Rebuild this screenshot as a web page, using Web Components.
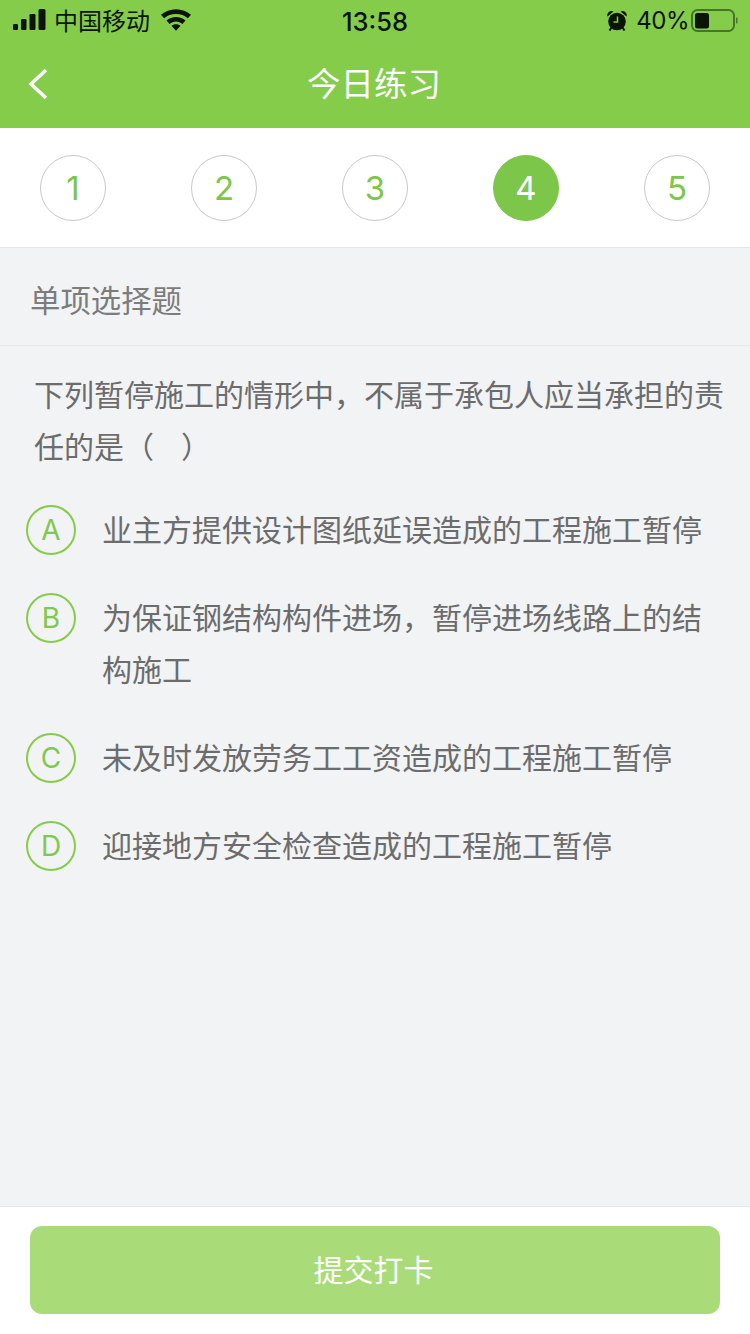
<!DOCTYPE html>
<html lang="zh">
<head>
<meta charset="utf-8">
<title>今日练习</title>
<style>
  html, body { margin: 0; padding: 0; }
  body {
    width: 750px;
    height: 1334px;
    display: flex;
    flex-direction: column;
    background: #f2f3f5;
    font-family: "Noto Sans CJK SC", "Noto Sans", sans-serif;
    overflow: hidden;
  }
  question-list { flex: 1; }
</style>
</head>
<body>
<app-header title="今日练习"></app-header>
<step-bar>
  <step-dot>1</step-dot>
  <step-dot>2</step-dot>
  <step-dot>3</step-dot>
  <step-dot active>4</step-dot>
  <step-dot>5</step-dot>
</step-bar>
<question-list heading="单项选择题">
  <span slot="question">下列暂停施工的情形中，不属于承包人应当承担的责任的是（&nbsp;&nbsp;&nbsp;&nbsp;）</span>
  <option-row letter="A">业主方提供设计图纸延误造成的工程施工暂停</option-row>
  <option-row letter="B">为保证钢结构构件进场，暂停进场线路上的结构施工</option-row>
  <option-row letter="C">未及时发放劳务工工资造成的工程施工暂停</option-row>
  <option-row letter="D">迎接地方安全检查造成的工程施工暂停</option-row>
</question-list>
<submit-bar>提交打卡</submit-bar>

<script>
const headerTemplate = document.createElement('template');
headerTemplate.innerHTML = `
<style>
  :host { display: block; height: 128px; background: #86cc4b; }
  .status {
    height: 40px;
    display: grid;
    grid-template-columns: 1fr auto 1fr;
    align-items: center;
    padding: 0 12px 0 13px;
    color: #0c1408;
    font-size: 24px;
    font-family: "Noto Sans CJK SC", sans-serif;
  }
  .left, .right { display: flex; align-items: center; }
  .left span { margin: -2px 0 0 8px; }
  .left svg:last-child { margin-left: 11px; }
  .right { justify-content: flex-end; }
  .time { font: 500 25.500px Inter, "Liberation Sans", sans-serif; padding: 2px 1px 0 0; }
  .pct { font: 400 24px Inter, "Liberation Sans", sans-serif; margin: 0 2px 0 9px; letter-spacing: -0.5px; }
  .nav {
    height: 88px;
    display: flex;
    align-items: center;
    justify-content: center;
    position: relative;
  }
  .back { position: absolute; left: 28px; top: 28px; }
  h1 { margin: 0 2px 6px 0; font-size: 33.500px; font-weight: 400; color: #fff; }
</style>
<div class="status">
  <div class="left">
    <svg width="33" height="22" viewBox="0 0 33 22" fill="#0c1408">
      <rect x="0" y="15" width="5" height="6" rx="1.2"/>
      <rect x="8" y="10" width="5.5" height="11" rx="1.2"/>
      <rect x="16.500" y="5" width="6" height="16" rx="1.2"/>
      <rect x="25.500" y="0" width="7" height="21" rx="1.5"/>
    </svg>
    <span>中国移动</span>
    <svg width="30" height="22" viewBox="0 0 29 21" fill="#0c1408">
      <path d="M14.500 0C9 0 4 2 0 5.500l3 3.400C6 6.200 10 4.700 14.500 4.700s8.500 1.500 11.500 4.200l3-3.400C25 2 20 0 14.500 0z"/>
      <path d="M14.500 7.500c-3.600 0-6.800 1.300-9.200 3.500l3 3.300c1.700-1.400 3.800-2.300 6.200-2.300s4.500.9 6.200 2.300l3-3.300c-2.400-2.200-5.600-3.500-9.200-3.500z"/>
      <path d="M14.500 14.500c-1.800 0-3.300.6-4.400 1.600l4.400 4.900 4.400-4.900c-1.100-1-2.600-1.600-4.400-1.600z"/>
    </svg>
  </div>
  <div class="time">13:58</div>
  <div class="right">
    <svg width="20" height="21" viewBox="0 0 20 21" fill="#0c1408">
      <circle cx="10" cy="11.500" r="8.800"/>
      <path d="M.5 6.500a4.200 4.200 0 0 1 6-5zM19.500 6.500a4.200 4.200 0 0 0-6-5z"/>
      <path d="M4.500 17.500l-2 3M15.500 17.500l2 3" stroke="#0c1408" stroke-width="2"/>
      <path d="M10.500 6.500v5.500H6.500" fill="none" stroke="#86cc4b" stroke-width="1.500"/>
    </svg>
    <span class="pct">40%</span>
    <svg width="47" height="23" viewBox="0 0 47 23">
      <rect x="1" y="1" width="42" height="21" rx="5.500" fill="none" stroke="#47742a" stroke-width="2"/>
      <rect x="4" y="4" width="14" height="15.500" rx="2.500" fill="#0c1408"/>
      <rect x="45" y="8.500" width="1.500" height="6" rx="0.700" fill="#47742a"/>
    </svg>
  </div>
</div>
<div class="nav">
  <svg class="back" width="20" height="32" viewBox="0 0 20 32" fill="none" stroke="#fff" stroke-width="3.500">
    <path d="M18 2L3 16l15 14"/>
  </svg>
  <h1></h1>
</div>
`;

class AppHeader extends HTMLElement {
  constructor() {
    super();
    this.attachShadow({ mode: 'open' });
    this.shadowRoot.appendChild(headerTemplate.content.cloneNode(true));
    this.shadowRoot.querySelector('h1').textContent = this.getAttribute('title');
  }
}

const stepBarTemplate = document.createElement('template');
stepBarTemplate.innerHTML = `
<style>
  :host {
    display: flex;
    justify-content: space-between;
    align-items: center;
    height: 119px;
    padding: 0 40px 0 40px;
    background: #fff;
    border-bottom: 1px solid #e6e6e6;
  }
</style>
<slot></slot>
`;

class StepBar extends HTMLElement {
  constructor() {
    super();
    this.attachShadow({ mode: 'open' });
    this.shadowRoot.appendChild(stepBarTemplate.content.cloneNode(true));
  }
}

const stepDotTemplate = document.createElement('template');
stepDotTemplate.innerHTML = `
<style>
  :host {
    box-sizing: border-box;
    display: flex;
    align-items: center;
    justify-content: center;
    width: 66px;
    height: 66px;
    border: 1px solid #c9c9c9;
    border-radius: 50%;
    color: #7cc64a;
    font: 400 33px Inter, "Liberation Sans", sans-serif;
  }
  :host([active]) {
    background: #7cc64a;
    border-color: #7cc64a;
    color: #fff;
  }
</style>
<slot></slot>
`;

class StepDot extends HTMLElement {
  constructor() {
    super();
    this.attachShadow({ mode: 'open' });
    this.shadowRoot.appendChild(stepDotTemplate.content.cloneNode(true));
  }
}

const questionTemplate = document.createElement('template');
questionTemplate.innerHTML = `
<style>
  :host { display: block; color: #6c6c6c; }
  .heading {
    height: 98px;
    box-sizing: border-box;
    padding: 5px 0 0 30px;
    display: flex;
    align-items: center;
    border-bottom: 1px solid #e6e7e9;
    font-size: 30.400px;
    color: #7c7c7c;
  }
  .question {
    padding: 21px 26px 0 34px;
    font-size: 30px;
    line-height: 52px;
  }
  .options {
    display: flex;
    flex-direction: column;
    gap: 36px;
    margin-top: 33px;
  }
</style>
<div class="heading"></div>
<div class="question"><slot name="question"></slot></div>
<div class="options"><slot></slot></div>
`;

class QuestionList extends HTMLElement {
  constructor() {
    super();
    this.attachShadow({ mode: 'open' });
    this.shadowRoot.appendChild(questionTemplate.content.cloneNode(true));
    this.shadowRoot.querySelector('.heading').textContent = this.getAttribute('heading');
  }
}

const optionTemplate = document.createElement('template');
optionTemplate.innerHTML = `
<style>
  :host {
    display: flex;
    align-items: flex-start;
    padding: 0 25px 0 26px;
    font-size: 30px;
    line-height: 52px;
    color: #6c6c6c;
  }
  .letter {
    box-sizing: border-box;
    flex: none;
    width: 50px;
    height: 50px;
    margin: 1px 26px 0 0;
    border: 2px solid #86cc4b;
    border-radius: 50%;
    display: flex;
    align-items: center;
    justify-content: center;
    color: #7fc94c;
    font: 400 28px/1 Inter, "Liberation Sans", sans-serif;
  }
  .text { margin: -2px 0 2px; }
</style>
<div class="letter"></div>
<div class="text"><slot></slot></div>
`;

class OptionRow extends HTMLElement {
  constructor() {
    super();
    this.attachShadow({ mode: 'open' });
    this.shadowRoot.appendChild(optionTemplate.content.cloneNode(true));
    this.shadowRoot.querySelector('.letter').textContent = this.getAttribute('letter');
  }
}

const submitTemplate = document.createElement('template');
submitTemplate.innerHTML = `
<style>
  :host {
    display: block;
    height: 128px;
    box-sizing: border-box;
    padding: 19px 30px 0;
    background: #fff;
    border-top: 1px solid #e6e7e9;
  }
  button {
    display: block;
    width: 100%;
    height: 88px;
    padding: 0 3px 4px 0;
    border: 0;
    border-radius: 12px;
    background: #a9dc79;
    color: #fff;
    font: 400 30px "Noto Sans CJK SC", sans-serif;
  }
</style>
<button><slot></slot></button>
`;

class SubmitBar extends HTMLElement {
  constructor() {
    super();
    this.attachShadow({ mode: 'open' });
    this.shadowRoot.appendChild(submitTemplate.content.cloneNode(true));
  }
}

window.customElements.define('app-header', AppHeader)
window.customElements.define('step-bar', StepBar)
window.customElements.define('step-dot', StepDot)
window.customElements.define('question-list', QuestionList)
window.customElements.define('option-row', OptionRow)
window.customElements.define('submit-bar', SubmitBar)
</script>
</body>
</html>
